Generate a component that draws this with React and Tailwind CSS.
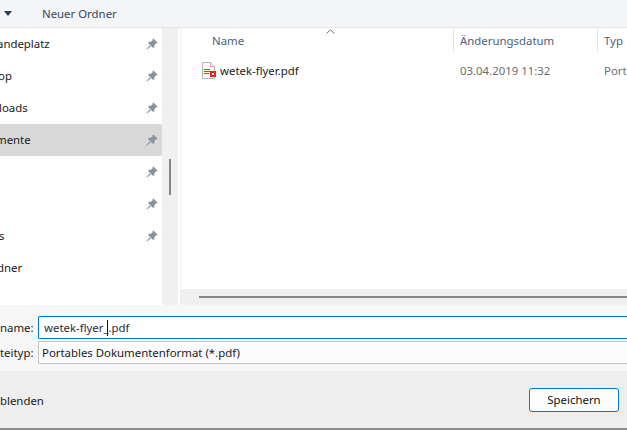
import React from "react";

const rows = [
  { label: "andeplatz", shift: "-ml-[3px]", pin: true },
  { label: "op", shift: "-ml-[2px]", pin: true },
  { label: "loads", shift: "-ml-[1px]", pin: true },
  { label: "mente", shift: "-ml-[4px]", pin: true, active: true },
  { label: "", pin: true },
  { label: "", pin: true },
  { label: "s", shift: "-ml-[1px]", pin: true },
  { label: "dner", shift: "-ml-[3px]" },
];

function PinIcon() {
  return (
    <svg width="12" height="12" viewBox="0 0 12 12" className="shrink-0">
      <path d="M7.4 0.4 L11.6 4.6 L10.6 5.6 L9.8 5.4 L8.4 7 L8.4 9 L7.2 10 L2 4.9 L3 3.7 L5 3.7 L6.6 2.2 L6.4 1.4 Z" fill="#8b939a" />
      <path d="M3.8 7.2 L0.3 11.2 L0.8 11.7 L4.8 8.2 Z" fill="#8b939a" />
    </svg>
  );
}

function PdfIcon() {
  return (
    <svg width="14" height="18" viewBox="0 0 14 18" className="shrink-0">
      <path d="M0.5 0.5 H8.5 L12.5 4.5 V16.5 H0.5 Z" fill="#fff" stroke="#b5b5b5" />
      <path d="M8.5 0.5 V4.5 H12.5" fill="#f3f3f3" stroke="#b5b5b5" />
      <path d="M2 7.5 H8 M2 9.5 H8 M2 11.5 H7" stroke="#f0301c" strokeWidth="1" />
      <rect x="8" y="9" width="6" height="6" fill="#e02a1c" />
      <rect x="10" y="11" width="2" height="2" fill="#fff" />
    </svg>
  );
}

export default function App() {
  return (
    <div className="flex h-[430px] w-[627px] flex-col overflow-hidden bg-white font-['Noto_Sans',sans-serif] text-[11.4px] text-[#1a1a1a]">
      {/* Toolbar */}
      <div className="flex h-[28px] shrink-0 items-center border-b border-[#e6e6e6] bg-[#f4f5f7] pl-[4px]">
        <svg width="8" height="5" viewBox="0 0 8 5" className="shrink-0">
          <path d="M0 0 H8 L4 5 Z" fill="#2f4058" />
        </svg>
        <span className="ml-[30px] text-[#34475f]">Neuer Ordner</span>
      </div>

      <div className="flex h-[277px] shrink-0">
        {/* Sidebar */}
        <div className="flex w-[162px] shrink-0 flex-col">
          {rows.map((row, i) => (
            <div
              key={i}
              className={`flex h-[32px] shrink-0 items-center justify-between rounded-r-[2px] pr-[4px] ${row.active ? "bg-[#d9d9d9]" : ""}`}
            >
              <span className={row.shift}>{row.label}</span>
              {row.pin && <PinIcon />}
            </div>
          ))}
        </div>

        {/* Sidebar scrollbar */}
        <div className="flex w-[16px] shrink-0 flex-col items-center bg-[#f0f0f0] pt-[131px]">
          <div className="h-[36px] w-[2px] bg-[#858585]" />
        </div>
        <div className="w-[3px] shrink-0 border-r border-[#efefef]" />

        {/* File list */}
        <div className="flex min-w-0 flex-1 flex-col">
          <div className="relative flex h-[25px] shrink-0 text-[#4c607a]">
            <svg width="9" height="5" viewBox="0 0 9 5" className="absolute left-[145px] top-[1px]">
              <path d="M0.5 4.5 L4.5 0.8 L8.5 4.5" fill="none" stroke="#6e6e6e" />
            </svg>
            <div className="flex w-[273px] shrink-0 items-center border-r border-[#e5e5e5] pl-[31px]">Name</div>
            <div className="flex w-[144px] shrink-0 items-center border-r border-[#e5e5e5] pl-[6px]">Änderungsdatum</div>
            <div className="flex items-center pl-[6px]">Typ</div>
          </div>
          <div className="flex h-[36px] shrink-0 items-center">
            <div className="flex w-[273px] shrink-0 items-center gap-[4px] pl-[21px]">
              <PdfIcon />
              <span>wetek-flyer.pdf</span>
            </div>
            <div className="w-[144px] shrink-0 pl-[6px] text-[#6d6d6d]">03.04.2019 11:32</div>
            <div className="whitespace-nowrap pl-[6px] text-[#6d6d6d]">Port</div>
          </div>
          <div className="flex-1" />
          {/* Horizontal scrollbar */}
          <div className="flex h-[16px] shrink-0 items-center bg-[#f0f0f0] pl-[18px]">
            <div className="h-[2px] flex-1 bg-[#858585]" />
          </div>
        </div>
      </div>

      {/* Name and type fields */}
      <div className="flex h-[66px] shrink-0 flex-col gap-[2px] bg-[#f7f7f7] pt-[11px]">
        <div className="flex items-center">
          <span className="w-[33px] shrink-0 text-right">name:</span>
          <div className="ml-[5px] flex h-[23px] flex-1 items-center rounded-l-[2px] border border-r-0 border-[#0078d7] bg-white pl-[5px]">
            <span className="text-[#1f2d3d]">wetek-flyer_</span>
            <span className="-ml-[2px] h-[16px] w-[1px] bg-[#111]" />
            <span className="ml-[1px] text-[#1f2d3d]">.pdf</span>
          </div>
        </div>
        <div className="flex items-center">
          <span className="w-[33px] shrink-0 text-right">teityp:</span>
          <div className="ml-[5px] flex h-[23px] flex-1 items-center rounded-l-[2px] border border-r-0 border-[#c4c4c4] bg-[#fcfcfc] pl-[3px]">
            Portables Dokumentenformat (*.pdf)
          </div>
        </div>
      </div>

      {/* Footer */}
      <div className="flex min-h-0 flex-1 items-center justify-between border-b-2 border-[#8c8c8c] bg-[#eeeeee] pr-[8px]">
        <span className="pt-[2px]">blenden</span>
        <button className="h-[24px] w-[90px] rounded-[3px] border border-[#0078d7] bg-[#fdfdfd] text-[11.4px] text-[#111]">
          Speichern
        </button>
      </div>
    </div>
  );
}
